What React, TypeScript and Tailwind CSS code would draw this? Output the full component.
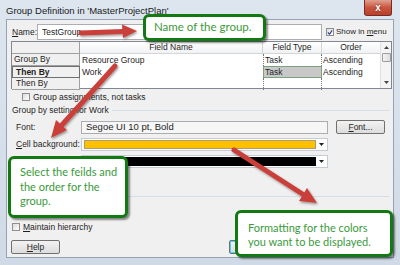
import React from 'react';

const ui = { fontFamily: '"Liberation Sans", Arial, sans-serif' };
const callFont = { fontFamily: 'Lato, "Open Sans", sans-serif' };

function Check({ checked = false }: { checked?: boolean }) {
  return (
    <div className="w-[8px] h-[8px] shrink-0 border border-[#8e8f8f] bg-gradient-to-br from-[#dcdcdc] to-white flex items-center justify-center">
      {checked && (
        <svg width="7" height="7" viewBox="0 0 7 7">
          <path d="M1 3.5 L3 5.5 L6 1" stroke="#1e3c8c" strokeWidth="1.3" fill="none" />
        </svg>
      )}
    </div>
  );
}

function Btn({ children, className = '' }: { children?: React.ReactNode; className?: string }) {
  return (
    <div
      className={`h-[14px] flex items-center justify-center rounded-[2px] border border-[#707070] bg-gradient-to-b from-[#f2f2f2] to-[#dddddd] text-[8.5px] text-[#1e1e1e] ${className}`}
    >
      {children}
    </div>
  );
}

function Combo({ fill }: { fill: string }) {
  return (
    <div className="w-[247px] h-[13px] border border-[#c5cbd4] bg-white flex items-center pl-[2px]">
      <div className={`h-[9px] flex-1 ${fill}`} />
      <div className="w-[11px] flex items-center justify-center">
        <svg width="5" height="3" viewBox="0 0 5 3">
          <path d="M0 0 H5 L2.5 3 Z" fill="#222" />
        </svg>
      </div>
    </div>
  );
}

function Callout({ className, lines }: { className: string; lines: string[] }) {
  return (
    <div
      className={`absolute bg-white border-[3px] border-[#137a13] rounded-[6px] shadow-[2px_2px_2px_rgba(0,0,0,0.45)] text-[#3a9a3a] whitespace-nowrap ${className}`}
      style={callFont}
    >
      {lines.map((l) => (
        <div key={l}>{l}</div>
      ))}
    </div>
  );
}

export default function App() {
  return (
    <div className="relative w-[400px] h-[265px] overflow-hidden bg-gradient-to-b from-[#dde6ef] to-[#cfdae6] px-[6px] flex flex-col whitespace-nowrap" style={ui}>
      {/* title bar */}
      <div className="h-[19px] flex items-start justify-between shrink-0">
        <div className="mt-[4px] text-[9.5px] text-[#1a1a1a]">Group Definition in 'MasterProjectPlan'</div>
        <div className="w-[28px] h-[16px] mr-[2px] rounded-b-[3px] border border-[#7a2a20] border-t-0 bg-gradient-to-b from-[#e0a090] via-[#c9553f] to-[#b8402c] flex items-center justify-center">
          <span className="text-white text-[10px] font-bold leading-none" style={{ textShadow: '0 0 2px #5a1a10' }}>x</span>
        </div>
      </div>

      {/* client */}
      <div className="h-[239px] border border-[#95a3b3] bg-[#f0f0f0] flex flex-col pl-[4px] text-[8.5px] text-[#1e1e1e]">
        {/* name row */}
        <div className="flex items-center mt-[4px] h-[16px]">
          <span className="w-[26px] pl-[1px]"><u>N</u>ame:</span>
          <div className="w-[285px] h-[16px] border border-[#abadb3] bg-white flex items-center pl-[4px]">TestGroup</div>
          <div className="ml-[4px] flex items-center gap-[2px] text-[8px]">
            <Check checked />
            <span>Show in <u>m</u>enu</span>
          </div>
        </div>

        {/* table */}
        <div className="mt-[1px] w-[381px] h-[48px] border border-[#828790] bg-white flex">
          <div className="grid grid-cols-[68px_183px_59px_58px] grid-rows-[12px_12px_12px_12px] leading-[11px]">
            <div className="border-r border-b border-[#a0a0a0] bg-[#f0f0f0]" />
            <div className="border-r border-b border-[#d5d5d5] bg-gradient-to-b from-white to-[#f1f2f4] flex items-center justify-center">Field Name</div>
            <div className="border-r border-b border-[#d5d5d5] bg-gradient-to-b from-white to-[#f1f2f4] flex items-center justify-center">Field Type</div>
            <div className="border-b border-[#d5d5d5] bg-gradient-to-b from-white to-[#f1f2f4] flex items-center justify-center">Order</div>

            <div className="border-r border-b border-[#a0a0a0] bg-[#f0f0f0] pl-[2px] flex items-center">Group By</div>
            <div className="pl-[2px] flex items-center">Resource Group</div>
            <div className="border-l border-r border-dotted border-[#777] pl-[1px] flex items-center">Task</div>
            <div className="pl-[1px] flex items-center">Ascending</div>

            <div className="border border-[#707070] bg-[#f0f0f0] pl-[3px] flex items-center font-bold">Then By</div>
            <div className="pl-[2px] flex items-center">Work</div>
            <div className="border border-[#7da27d] bg-[#c8c8c8] pl-[1px] flex items-center">Task</div>
            <div className="pl-[1px] flex items-center">Ascending</div>

            <div className="border-r border-b border-[#a0a0a0] bg-[#f0f0f0] pl-[4px] flex items-center">Then By</div>
            <div />
            <div className="border-l border-r border-dotted border-[#777]" />
            <div />
          </div>
          <div className="flex-1 border-l border-[#e0e0e0] bg-[#f4f4f4] flex flex-col items-center">
            <svg width="5" height="3" viewBox="0 0 5 3" className="mt-[4px]">
              <path d="M0 3 H5 L2.5 0 Z" fill="#444" />
            </svg>
            <div className="mt-[4px] w-[9px] h-[9px] border border-[#9c9c9c] rounded-[1px] bg-gradient-to-r from-[#f4f4f4] to-[#dedede]" />
            <div className="flex-1" />
            <svg width="5" height="3" viewBox="0 0 5 3" className="mb-[4px]">
              <path d="M0 0 H5 L2.5 3 Z" fill="#444" />
            </svg>
          </div>
        </div>

        {/* assignments */}
        <div className="mt-[3px] ml-[11px] flex items-center gap-[3px] h-[10px]">
          <Check />
          <span>Group assignments, not tasks</span>
        </div>

        {/* group by setting */}
        <div className="mt-[3px] flex items-center h-[11px] pl-[1px]">
          <span>Group by setting for Work</span>
          <div className="flex-1 h-px bg-[#d5dfe5] ml-[3px] mr-[3px]" />
        </div>

        {/* font */}
        <div className="mt-[4px] flex items-center h-[14px]">
          <span className="w-[70px] pl-[5px]">Font:</span>
          <div className="w-[247px] h-[13px] border border-[#abadb3] bg-[#f6f6f6] flex items-center pl-[4px] text-[9.5px]">Segoe UI 10 pt, Bold</div>
          <Btn className="ml-[8px] w-[49px]"><span><u>F</u>ont...</span></Btn>
        </div>

        {/* cell background */}
        <div className="mt-[4px] flex items-center h-[13px]">
          <span className="w-[70px] pl-[5px]"><u>C</u>ell background:</span>
          <Combo fill="bg-[#ffc000] border border-[#b09a70]" />
        </div>

        {/* pattern */}
        <div className="mt-[4px] flex items-center h-[13px]">
          <span className="w-[70px] pl-[5px]"><u>P</u>attern:</span>
          <Combo fill="bg-black" />
        </div>

        <div className="mt-[28px] h-px bg-[#d5dfe5] mr-[3px]" />

        {/* maintain hierarchy */}
        <div className="mt-[25px] flex items-center gap-[3px] h-[10px] pl-[1px]">
          <Check />
          <span><u>M</u>aintain hierarchy</span>
        </div>

        {/* buttons */}
        <div className="mt-[8px] flex items-center">
          <Btn className="w-[49px]"><span><u>H</u>elp</span></Btn>
          <Btn className="ml-[169px] w-[49px] border-[#3c7fb1] shadow-[inset_0_0_0_1px_#48d4fe]" />
        </div>
      </div>

      {/* arrows */}
      <svg className="absolute left-0 top-0" width="400" height="265" viewBox="0 0 400 265">
        <defs>
          <filter id="sh" x="-20%" y="-20%" width="140%" height="140%">
            <feDropShadow dx="1" dy="1.5" stdDeviation="1" floodColor="#000" floodOpacity="0.4" />
          </filter>
        </defs>
        <g filter="url(#sh)" fill="#c9403b" stroke="#c9403b" strokeLinecap="round">
          <line x1="81" y1="33" x2="124" y2="31.5" strokeWidth="5" />
          <polygon points="137,31 122,24.5 123,38" stroke="none" />

          <line x1="115" y1="66" x2="61" y2="126" strokeWidth="5" />
          <polygon points="51,138 56,120 67,130" stroke="none" />

          <line x1="234" y1="150" x2="304" y2="195" strokeWidth="5" />
          <polygon points="317,203 299,201 307,188" stroke="none" />
        </g>
      </svg>

      {/* callouts */}
      <Callout className="left-[143px] top-[14px] w-[123px] h-[27px] pl-[8px] pt-[3px] text-[11.5px] leading-[14px]" lines={['Name of the group.']} />
      <Callout
        className="left-[8px] top-[156px] w-[120px] h-[62px] pl-[9px] pt-[6px] text-[11px] leading-[14.5px]"
        lines={['Select the feilds and', 'the order for the', 'group.']}
      />
      <Callout
        className="left-[235px] top-[210px] w-[158px] h-[47px] pl-[10px] pt-[8px] text-[11px] leading-[13.5px]"
        lines={['Formatting for the colors', 'you want to be displayed.']}
      />
    </div>
  );
}
